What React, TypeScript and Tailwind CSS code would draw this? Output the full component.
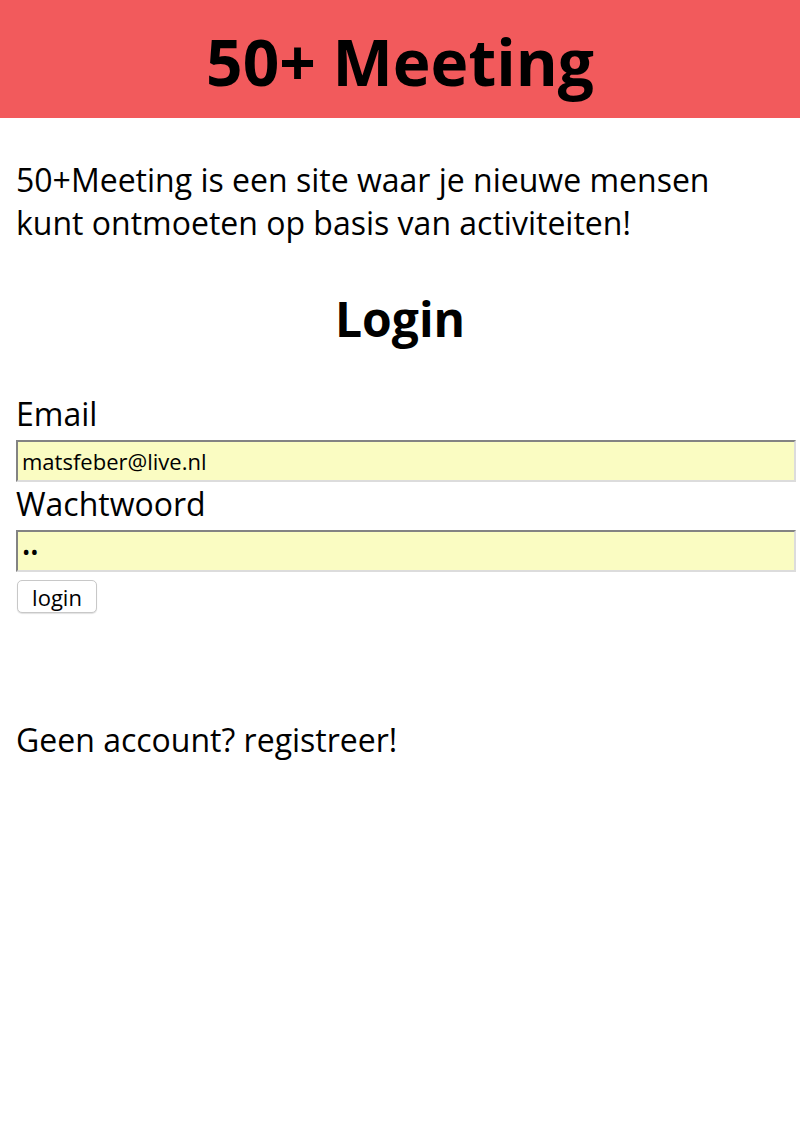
import React from 'react';

const font = { fontFamily: '"Open Sans", "Liberation Sans", sans-serif' };

const Field: React.FC<{ label: string; type: string; value: string; first?: boolean }> = ({ label, type, value, first }) => (
  <>
    <label className={`block text-[32px] leading-[41px] ${first ? 'mt-[42px]' : 'mt-[1px]'}`}>{label}</label>
    <input
      type={type}
      readOnly
      value={value}
      className="mt-[6px] block h-[42px] w-[780px] border-2 border-t-[#838383] border-l-[#838383] border-b-[#dcdcdc] border-r-[#dcdcdc] bg-[#fafcc2] px-[4px] text-[22px] text-black outline-none"
    />
  </>
);

const App: React.FC = () => {
  return (
    <div className="min-h-[1132px] bg-white text-black" style={font}>
      <header className="bg-[#f25a5c] pt-[18px] pb-[13px] text-center">
        <h1 className="text-[64px] font-bold leading-[87px]">50+ Meeting</h1>
      </header>

      <main className="px-4">
        <p className="mt-[40px] text-[32px] leading-[43px]">
          50+Meeting is een site waar je nieuwe mensen kunt ontmoeten op basis van activiteiten!
        </p>

        <h2 className="mt-[42px] text-center text-[48px] font-bold leading-[65px]">Login</h2>

        <form>
          <Field label="Email" type="email" value="matsfeber@live.nl" first />
          <Field label="Wachtwoord" type="password" value="ab" />
          <button
            type="button"
            className="mt-[8px] ml-[1px] h-[33px] w-[80px] rounded-[5px] border border-[#c8c8c8] bg-white text-[22px] leading-none shadow-[0_1px_1px_rgba(0,0,0,0.12)]"
          >
            login
          </button>
        </form>

        <p className="mt-[106px] text-[32px] leading-[41px]">Geen account? registreer!</p>
      </main>
    </div>
  );
};

export default App;
